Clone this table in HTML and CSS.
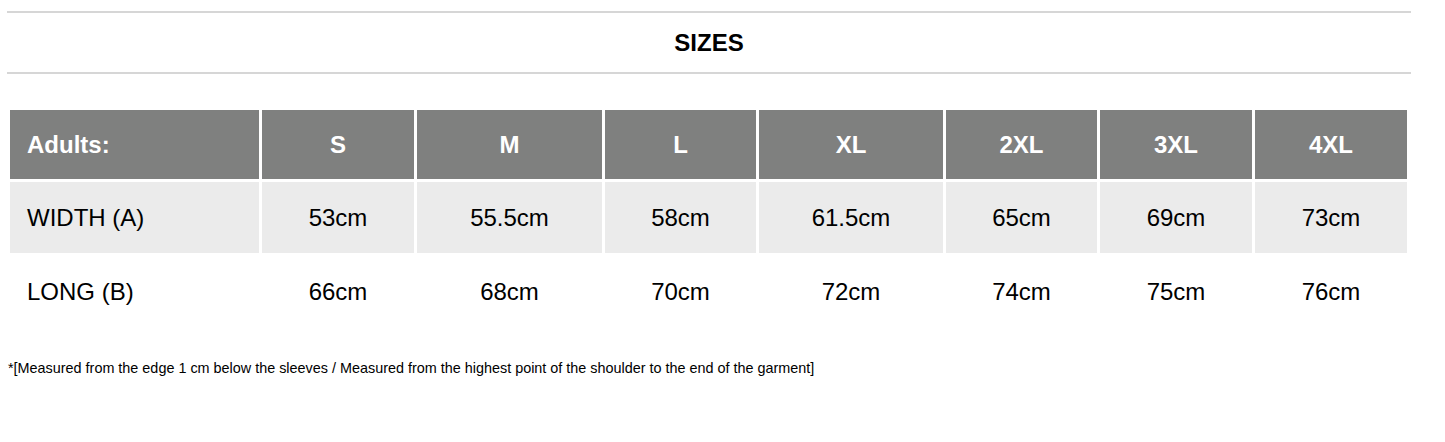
FILE: index.html
```html
<!DOCTYPE html>
<html>
<head>
<meta charset="utf-8">
<link rel="stylesheet" href="styles.css">
</head>
<body>
<div class="page">
  <div class="title-bar"><h2 class="title">SIZES</h2></div>
  <table class="sizes">
    <colgroup>
      <col class="c-label"><col class="c-s"><col class="c-m"><col class="c-l"><col class="c-xl"><col class="c-2xl"><col class="c-3xl"><col class="c-4xl">
    </colgroup>
    <thead>
      <tr class="head">
        <th class="label">Adults:</th><th>S</th><th>M</th><th>L</th><th>XL</th><th>2XL</th><th>3XL</th><th>4XL</th>
      </tr>
    </thead>
    <tbody>
      <tr class="shaded">
        <td class="label">WIDTH (A)</td><td>53cm</td><td>55.5cm</td><td>58cm</td><td>61.5cm</td><td>65cm</td><td>69cm</td><td>73cm</td>
      </tr>
      <tr>
        <td class="label">LONG (B)</td><td>66cm</td><td>68cm</td><td>70cm</td><td>72cm</td><td>74cm</td><td>75cm</td><td>76cm</td>
      </tr>
    </tbody>
  </table>
  <p class="note">*[Measured from the edge 1 cm below the sleeves / Measured from the highest point of the shoulder to the end of the garment]</p>
</div>
</body>
</html>
```
FILE: styles.css
```css
html, body {
  margin: 0;
  padding: 0;
  background: #fff;
}
body {
  font-family: "Liberation Sans", Arial, sans-serif;
  color: #000;
}
.page {
  width: 1404px;
  padding: 11px 0 0 7px;
}
.title-bar {
  border-top: 2px solid #d6d6d6;
  border-bottom: 2px solid #d6d6d6;
  height: 59px;
  display: flex;
  align-items: center;
  justify-content: center;
}
.title {
  margin: 1px 0 0 0;
  font-size: 24px;
  font-weight: bold;
}
.sizes {
  margin-top: 33px;
  border-collapse: separate;
  border-spacing: 3px;
  table-layout: fixed;
  width: 1403px;
}
.c-label { width: 249px; }
.c-s { width: 152px; }
.c-m { width: 185px; }
.c-l { width: 151px; }
.c-xl { width: 184px; }
.c-2xl { width: 151px; }
.c-3xl { width: 152px; }
.c-4xl { width: 152px; }
.sizes th, .sizes td {
  padding: 0;
  text-align: center;
  font-size: 24px;
}
.sizes th {
  height: 69px;
  background: #7f807f;
  color: #fff;
  font-weight: bold;
}
.sizes td {
  height: 71px;
  font-weight: normal;
}
.sizes .label {
  text-align: left;
  padding-left: 17px;
}
.shaded td {
  background: #ebebeb;
}
.note {
  margin: 30px 0 0 1px;
  font-size: 14.4px;
}
```
